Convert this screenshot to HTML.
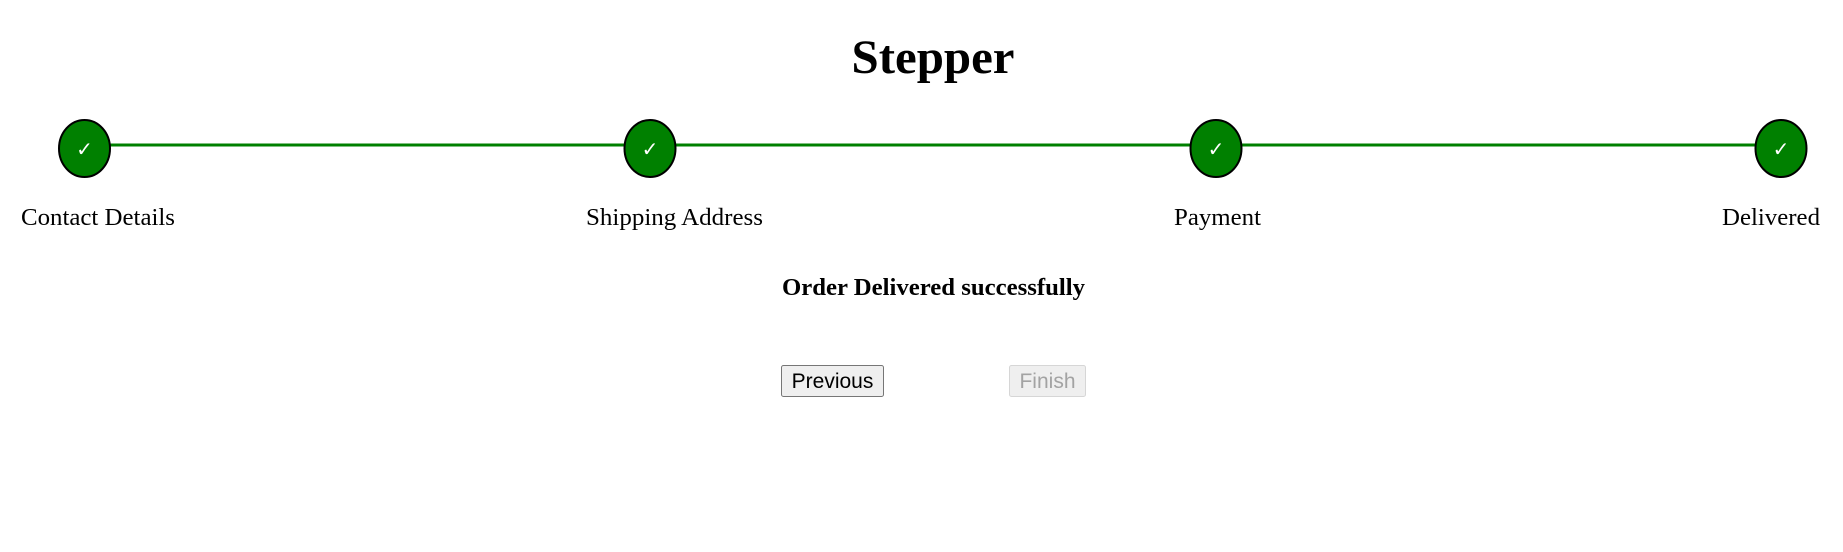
<!DOCTYPE html>
<html><head><meta charset="utf-8"><style>
html,body{margin:0;padding:0;background:#fff;width:1843px;height:552px;overflow:hidden}
svg{display:block}
</style></head><body>
<svg width="1843" height="552" viewBox="0 0 1843 552" xmlns="http://www.w3.org/2000/svg">
<text x="933" y="73" text-anchor="middle" font-family="Liberation Serif, serif" font-weight="bold" font-size="48" textLength="163" lengthAdjust="spacingAndGlyphs">Stepper</text>
<rect x="110" y="143.5" width="1645" height="3" fill="#008000"/>
<g fill="#008000" stroke="#000" stroke-width="2">
<ellipse cx="84.5" cy="148.5" rx="25.5" ry="28.5"/>
<ellipse cx="650" cy="148.5" rx="25.5" ry="28.5"/>
<ellipse cx="1216" cy="148.5" rx="25.5" ry="28.5"/>
<ellipse cx="1781" cy="148.5" rx="25.5" ry="28.5"/>
</g>
<g fill="#fff" font-family="DejaVu Sans, sans-serif" font-size="20" text-anchor="middle">
<text x="84.5" y="156">✓</text>
<text x="650" y="156">✓</text>
<text x="1216" y="156">✓</text>
<text x="1781" y="156">✓</text>
</g>
<g font-family="Liberation Serif, serif" font-size="24" fill="#000">
<text x="21" y="225" textLength="154" lengthAdjust="spacingAndGlyphs">Contact Details</text>
<text x="586" y="225" textLength="177" lengthAdjust="spacingAndGlyphs">Shipping Address</text>
<text x="1174" y="225" textLength="87" lengthAdjust="spacingAndGlyphs">Payment</text>
<text x="1722" y="225" textLength="98" lengthAdjust="spacingAndGlyphs">Delivered</text>
</g>
<text x="782" y="295" font-family="Liberation Serif, serif" font-weight="bold" font-size="24" textLength="303" lengthAdjust="spacingAndGlyphs">Order Delivered successfully</text>
<rect x="781.5" y="365.5" width="102" height="31" rx="2" fill="#efefef" stroke="#767676" stroke-width="1"/>
<text x="832.5" y="388" text-anchor="middle" font-family="Liberation Sans, sans-serif" font-size="21" fill="#000">Previous</text>
<rect x="1009.5" y="365.5" width="76" height="31" rx="2" fill="#efefef" stroke="#d6d6d6" stroke-width="1"/>
<text x="1047.5" y="388" text-anchor="middle" font-family="Liberation Sans, sans-serif" font-size="21" fill="#a3a3a3">Finish</text>
</svg>
</body></html>
